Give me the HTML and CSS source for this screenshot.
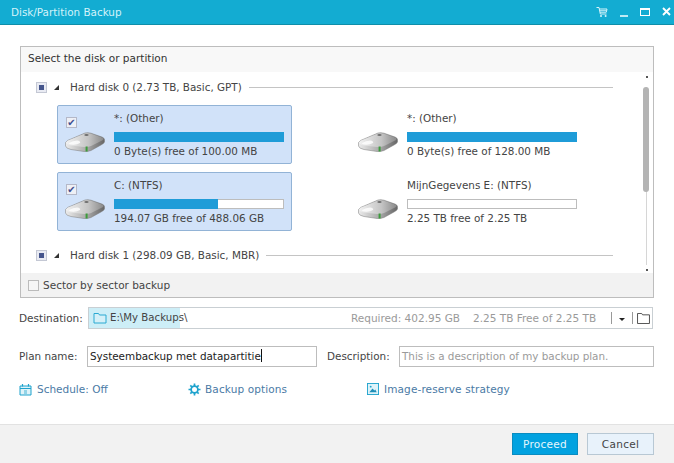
FILE: index.html
```html
<!DOCTYPE html>
<html lang="en">
<head>
<meta charset="utf-8">
<title>Disk/Partition Backup</title>
<link rel="stylesheet" href="styles.css">
</head>
<body>
<svg class="defs" width="0" height="0">
  <defs>
    <linearGradient id="dtop" x1="0" y1="0" x2="1" y2="0"><stop offset="0" stop-color="#f2f2f2"/><stop offset=".6" stop-color="#c4c4c4"/><stop offset="1" stop-color="#8a8a8a"/></linearGradient>
    <linearGradient id="dside" x1="0" y1="0" x2="1" y2="0"><stop offset="0" stop-color="#ececec"/><stop offset=".55" stop-color="#a8a8a8"/><stop offset="1" stop-color="#666"/></linearGradient>
    <symbol id="disk" viewBox="0 0 40 20">
      <path d="M.5 10.5 Q2 8 6 7 L20 1 Q23 .3 26 1.2 L37 5 Q39.5 6 39.5 7.5 L39.5 10 Q39 11.5 36 13 L26 18.5 Q23 19.8 19 19.5 L6 17.5 Q1 16.5 .5 14 Z" fill="url(#dside)" stroke="#7a7a7a" stroke-width=".5"/>
      <path d="M1 10.5 Q2 8.5 6 7.5 L20 1.5 Q23 .8 26 1.7 L37 5.5 Q39.5 6.5 38 8 L26 14 Q23 15.3 19 15 L6 13.5 Q1.5 12.5 1 10.5 Z" fill="url(#dtop)"/>
      <path d="M4 11 Q8 8.5 12 8.5 Q16 9 15 11 Q12 13 8 12.8 Q4 12.5 4 11 Z" fill="#fff" opacity=".8"/>
      <ellipse cx="21.5" cy="3" rx="2.2" ry="1.1" fill="#6f6f6f"/>
      <rect x="20.6" y="14.5" width="2" height="5" fill="#3b9c3b"/>
    </symbol>
  </defs>
</svg>
<div class="window">
  <header class="titlebar">
    <span class="title">Disk/Partition Backup</span>
    <div class="winctl">
      <svg class="ic-cart" viewBox="0 0 12 12"><path d="M.5 1.5H3L4.3 8H10.5M3.2 3H11L10.3 6.2H4" fill="none" stroke="#d8f4fa" stroke-width="1"/><path d="M3.5 4.6H10.5" stroke="#d8f4fa" stroke-width=".8"/><circle cx="5" cy="10" r="1" fill="#d8f4fa"/><circle cx="9.6" cy="10" r="1" fill="#d8f4fa"/></svg>
      <span class="ic-min"></span>
      <span class="ic-max"></span>
      <svg class="ic-close" viewBox="0 0 9 9"><path d="M1 1L8 8M8 1L1 8" stroke="#fff" stroke-width="1.9"/></svg>
    </div>
  </header>

  <main class="content">
    <section class="panel">
      <div class="panel-head">Select the disk or partition</div>
      <div class="panel-body">
        <div class="tree">
          <div class="disk-row">
            <span class="tri-box"><i></i></span>
            <span class="tri"></span>
            <span class="disk-name">Hard disk 0 (2.73 TB, Basic, GPT)</span>
            <span class="rule"></span>
          </div>
          <div class="cards">
            <div class="card selected">
              <div class="card-left">
                <span class="check">✔</span>
                <svg class="disk"><use href="#disk"/></svg>
              </div>
              <div class="card-info">
                <div class="part-name">*: (Other)</div>
                <div class="bar"><div class="fill" style="width:100%"></div></div>
                <div class="part-free">0 Byte(s) free of 100.00 MB</div>
              </div>
            </div>
            <div class="card">
              <div class="card-left">
                <span class="check hidden"></span>
                <svg class="disk"><use href="#disk"/></svg>
              </div>
              <div class="card-info">
                <div class="part-name">*: (Other)</div>
                <div class="bar"><div class="fill" style="width:100%"></div></div>
                <div class="part-free">0 Byte(s) free of 128.00 MB</div>
              </div>
            </div>
            <div class="card selected">
              <div class="card-left">
                <span class="check">✔</span>
                <svg class="disk"><use href="#disk"/></svg>
              </div>
              <div class="card-info">
                <div class="part-name">C: (NTFS)</div>
                <div class="bar"><div class="fill" style="width:61%"></div></div>
                <div class="part-free">194.07 GB free of 488.06 GB</div>
              </div>
            </div>
            <div class="card">
              <div class="card-left">
                <span class="check hidden"></span>
                <svg class="disk"><use href="#disk"/></svg>
              </div>
              <div class="card-info">
                <div class="part-name">MijnGegevens E: (NTFS)</div>
                <div class="bar"></div>
                <div class="part-free">2.25 TB free of 2.25 TB</div>
              </div>
            </div>
          </div>
          <div class="disk-row second">
            <span class="tri-box"><i></i></span>
            <span class="tri"></span>
            <span class="disk-name">Hard disk 1 (298.09 GB, Basic, MBR)</span>
            <span class="rule"></span>
          </div>
        </div>
        <div class="scrollbar">
          <span class="sb-arrow"></span>
          <div class="sb-track"><div class="sb-thumb"></div></div>
          <span class="sb-arrow down"></span>
        </div>
      </div>
      <div class="panel-foot">
        <span class="sector-box"></span>
        <span>Sector by sector backup</span>
      </div>
    </section>

    <div class="row dest-row">
      <label class="lbl">Destination:</label>
      <div class="dest">
        <div class="dest-path">
          <svg class="ic-folder" viewBox="0 0 14 12"><path d="M1 11V1.5H5.5L6.5 3H13V11Z" fill="#d5f0f8" stroke="#2aa9d2" stroke-width="1"/></svg>
          <span class="path-text">E:\My Backups\</span>
        </div>
        <span class="dest-req">Required: 402.95 GB</span>
        <span class="dest-free">2.25 TB Free of 2.25 TB</span>
        <span class="sep"></span>
        <span class="caret"></span>
        <span class="sep"></span>
        <svg class="ic-browse" viewBox="0 0 14 12"><path d="M.5 11.5V.5H5L6 2H13.5V11.5Z" fill="#fff" stroke="#444" stroke-width="1"/></svg>
      </div>
    </div>

    <div class="row plan-row">
      <label class="lbl plan-lbl">Plan name:</label>
      <div class="input plan-input">Systeembackup met datapartitie<span class="cursor"></span></div>
      <label class="lbl desc-lbl">Description:</label>
      <div class="input desc-input">This is a description of my backup plan.</div>
    </div>

    <div class="links">
      <a class="link l1">
        <svg class="ic-link" viewBox="0 0 13 13"><path d="M1 3H12V12H1Z M1 5.5H12" fill="#dff3f9" stroke="#1fa3cd" stroke-width="1"/><path d="M3.5 1V3.5M9.5 1V3.5" stroke="#1fa3cd" stroke-width="1.2"/><path d="M5 8H8M5 10H8" stroke="#1fa3cd" stroke-width=".8"/></svg>
        Schedule: Off
      </a>
      <a class="link l2">
        <svg class="ic-link" viewBox="0 0 13 13"><circle cx="6.5" cy="6.5" r="3.4" fill="none" stroke="#1fa3cd" stroke-width="1.8"/><path d="M6.5 .5V3M6.5 10V12.5M.5 6.5H3M10 6.5H12.5M2.3 2.3L4 4M9 9L10.7 10.7M10.7 2.3L9 4M4 9L2.3 10.7" stroke="#1fa3cd" stroke-width="1.7"/></svg>
        Backup options
      </a>
      <a class="link l3">
        <svg class="ic-pic" viewBox="0 0 13 13"><rect x=".5" y=".5" width="12" height="12" fill="#dff3f9" stroke="#1fa3cd"/><path d="M2.5 10L6 6L8 8L9 7L10.5 10Z" fill="#1f8fb8"/><circle cx="4" cy="4" r="1" fill="#1fa3cd"/></svg>
        Image-reserve strategy
      </a>
    </div>
  </main>

  <footer class="actions">
    <button class="btn primary">Proceed</button>
    <button class="btn">Cancel</button>
  </footer>
</div>
</body>
</html>
```
FILE: styles.css
```css
* { box-sizing: border-box; }
html, body { margin: 0; padding: 0; }
body {
  width: 674px;
  height: 463px;
  overflow: hidden;
  background: #fff;
  font-family: "DejaVu Sans", sans-serif;
  font-size: 10.5px;
  color: #3c3c3c;
}
.defs { position: absolute; }
.window { display: flex; flex-direction: column; height: 463px; }

.titlebar {
  height: 25px;
  flex: none;
  background: #13acd2;
  border-bottom: 1px solid #0f8ea9;
  display: flex;
  align-items: center;
  justify-content: space-between;
  padding: 0 3px 1px 11px;
}
.title { color: #d4f3fa; font-size: 10.4px; }
.winctl { display: flex; align-items: center; gap: 12px; }
.ic-cart { width: 12px; height: 12px; }
.ic-min { width: 8px; height: 2px; background: #bfeaf4; margin-top: 8px; }
.ic-max { width: 10px; height: 8px; border: 1px solid #fff; border-top-width: 2px; }
.ic-close { width: 9px; height: 9px; }

.content { flex: 1; padding: 21px 20px 0 19px; display: flex; flex-direction: column; }

.panel {
  width: 634px;
  height: 252px;
  border: 1px solid #bdbdbd;
  display: flex;
  flex-direction: column;
  margin-left: 1px;
}
.panel-head {
  height: 25px;
  flex: none;
  background: #f8f8f8;
  padding: 5px 0 0 7px;
  color: #333;
}
.panel-body { flex: 1; display: flex; min-height: 0; background: #fff; }
.tree { width: 610px; padding: 8px 18px 0 15px; flex: none; font-size: 10.4px; }
.disk-row { display: flex; align-items: center; height: 14px; }
.disk-row.second { margin-top: 17px; }
.tri-box {
  width: 11px; height: 11px;
  border: 1px solid #c4c8d4;
  background: #e9ebf3;
  display: flex; align-items: center; justify-content: center;
}
.tri-box i { width: 5px; height: 5px; background: #45558c; display: block; }
.tri {
  width: 0; height: 0;
  margin-left: 7px;
  border-left: 5px solid transparent;
  border-bottom: 5px solid #333;
}
.disk-name { margin-left: 11px; color: #444; white-space: nowrap; }
.rule { flex: 1; height: 1px; background: #c4c4c4; margin-left: 7px; }

.cards {
  display: grid;
  grid-template-columns: 235px 235px;
  column-gap: 58px;
  row-gap: 8px;
  margin: 11px 0 0 21px;
}
.card {
  height: 59px;
  border: 1px solid transparent;
  border-radius: 2px;
  display: flex;
  padding: 8px 7px 0 7px;
}
.card.selected { background: #d1e2f9; border-color: #92b3d6; }
.card-left { width: 49px; flex: none; display: flex; flex-direction: column; }
.check {
  width: 11px; height: 11px;
  border: 1px solid #b4b8c8;
  background: #eef0f6;
  color: #3f4f90;
  font-size: 10px;
  line-height: 9px;
  text-align: center;
  margin: 3px 0 0 1px;
  overflow: hidden;
}
.check.hidden { visibility: hidden; }
.disk { width: 40px; height: 20px; margin-top: 4px; }
.card-info { width: 171px; flex: none; }
.part-name { line-height: 12px; color: #444; margin-top: -2px; }
.bar {
  width: 170px; height: 10px;
  margin-top: 8px;
  border: 1px solid #bdbdbd;
  background: #fff;
}
.fill { height: 8px; background: #1f9cd8; outline: 1px solid #1f9cd8; }
.part-free { line-height: 13px; margin-top: 3px; color: #444; }

.scrollbar {
  flex: 1;
  display: flex;
  flex-direction: column;
  align-items: center;
  padding: 4px 0 2px 0;
  margin-left: 11px;
  margin-right: 2px;
}
.sb-arrow { width: 2px; height: 2px; background: #555; flex: none; }
.sb-track { flex: 1; width: 1px; background: #d6d6d6; margin: 9px 0 4px; position: relative; }
.sb-thumb {
  position: absolute;
  left: -3px; top: 0;
  width: 6px; height: 105px;
  background: #b4b4b4;
  border-radius: 3px;
}

.panel-foot {
  height: 24px;
  flex: none;
  background: #f2f2f2;
  display: flex;
  align-items: center;
  padding-left: 7px;
  color: #444;
}
.sector-box { width: 11px; height: 11px; border: 1px solid #bbb; background: #f6f6f6; margin-right: 4px; }

.row { display: flex; align-items: center; }
.dest-row { margin-top: 9px; height: 22px; }
.lbl { color: #444; white-space: nowrap; }
.dest-row .lbl { width: 69px; margin-top: -1px; }
.dest {
  width: 565px;
  height: 22px;
  border: 1px solid #c9cfd3;
  display: flex;
  align-items: center;
  color: #9a9a9a;
}
.dest-path {
  width: 91px; height: 20px;
  background: #cdeef7;
  display: flex;
  align-items: center;
  padding-left: 4px;
  flex: none;
  color: #444;
  white-space: nowrap;
  font-size: 10.2px;
}
.path-text { margin-top: -1px; }
.dest-req, .dest-free { margin-top: -1px; }
.ic-folder { width: 14px; height: 12px; margin-right: 3px; flex: none; }
.dest-req { margin-left: 171px; white-space: nowrap; }
.dest-free { margin-left: 13px; white-space: nowrap; }
.sep { width: 1px; height: 12px; background: #999; flex: none; }
.dest-free + .sep { margin-left: 15px; }
.caret {
  width: 0; height: 0;
  margin: 2px 7px 0 7px;
  border-left: 3px solid transparent;
  border-right: 3px solid transparent;
  border-top: 3px solid #222;
}
.ic-browse { width: 13px; height: 11px; margin-left: 4px; flex: none; }

.plan-row { margin-top: 16px; height: 22px; font-size: 10.4px; }
.plan-lbl { width: 69px; margin-top: -1px; }
.input {
  height: 21px;
  border: 1px solid #bdbdbd;
  padding: 0 2px;
  line-height: 18px;
  white-space: nowrap;
}
.plan-input { width: 230px; color: #222; margin-left: -1px; }
.cursor { display: inline-block; width: 1px; height: 13px; background: #111; vertical-align: -2px; }
.desc-lbl { margin-left: 10px; width: 72px; margin-top: -1px; }
.desc-input { width: 255px; color: #9a9a9a; }

.links { display: flex; margin-top: 14px; height: 16px; align-items: center; }
.link { display: flex; align-items: center; color: #4a7aa5; white-space: nowrap; font-size: 10.5px; }
.ic-link { width: 13px; height: 13px; margin-right: 5px; flex: none; }
.ic-pic { width: 12px; height: 12px; margin-right: 5px; flex: none; }
.l1 { width: 169px; }
.l2 { width: 179px; letter-spacing: .12px; }
.l2 .ic-link { margin-right: 4px; }
.l3 { letter-spacing: .12px; }

.actions {
  height: 39px;
  flex: none;
  background: #f2f2f2;
  border-top: 1px solid #e2e2e2;
  display: flex;
  justify-content: flex-end;
  align-items: flex-start;
  gap: 9px;
  padding: 8px 20px 0 0;
}
.btn {
  width: 67px; height: 22px;
  border: 1px solid #b8c8d4;
  background: #e8f2fb;
  color: #444;
  font-family: inherit;
  font-size: 10.5px;
  letter-spacing: .3px;
  padding: 0;
}
.btn.primary { width: 66px; background: #02a2e0; border-color: #0a8cc0; color: #e6f7fd; }
```
